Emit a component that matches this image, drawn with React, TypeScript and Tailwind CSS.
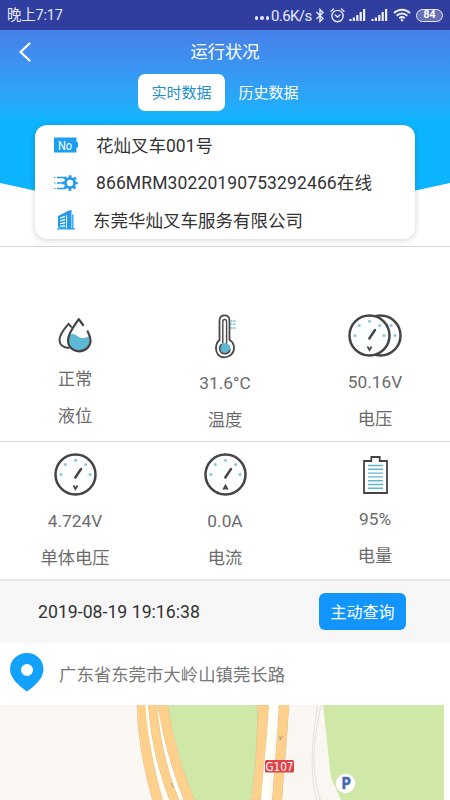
import { useState, ReactNode } from "react";

interface Reading {
  label: string;
  value: string;
  icon: ReactNode;
  iconBox: string;
}

const DropIcon = () => (
  <svg width="34" height="36" viewBox="0 0 34 36" fill="none" strokeLinecap="round" strokeLinejoin="round">
    <path d="M10.5 30C4.5 29.500 1.500 26 1.500 21.500C1.500 16.500 6 11 10.500 5.800L13.200 8.800" stroke="#4a4548" strokeWidth="2" />
    <path d="M10.800 17C14.500 14.800 17.500 16.500 20 18.500C23.500 21 27 20 31 18.500C32.500 27 28 32.500 21.200 33C13 32.500 9.300 26 10.800 17Z" fill="#5db9d3" />
    <path d="M25 7L20.800 1.200C16 8 10 15 10 22.500C10.200 29.500 15.500 33.300 21 33.300C27.500 33.300 32.500 28.500 32.500 22.500C32.500 19.500 31.300 16.500 29.700 13.500" stroke="#454145" strokeWidth="2.200" />
  </svg>
);

const ThermometerIcon = () => (
  <svg width="21" height="45" viewBox="0 0 21 45" fill="none" strokeLinecap="round">
    <path d="M4.500 26V6.200C4.500 -0.300 14.500 -0.300 14.500 6.200V26C17.500 27.700 19 30.500 19 34C19 39.500 14.800 43.300 9.500 43.300C4.200 43.300 1 39.500 1 34.500C1 30.800 2.300 27.800 4.500 26Z" stroke="#4a4548" strokeWidth="1.800" />
    <circle cx="10" cy="34.500" r="5.500" fill="#5db9d3" />
    <path d="M7.800 29V7.500C7.800 4.800 11.600 4.800 11.600 7.500V29M6.300 30.500C3 33.500 4.500 39.500 10 39.700C13 39.600 14.500 38 15 36" stroke="#4a4548" strokeWidth="1.400" />
    <path d="M16 7H17M19 7H20M16 10.300H17M19 10.300H20M16 14H17M19 14H20" stroke="#70bdd2" strokeWidth="1.600" />
  </svg>
);

const GaugeFace = ({ unit }: { unit: "V" | "A" }) => (
  <>
    <circle cx="21.500" cy="21.500" r="20" fill="#fcfeff" stroke="#444" strokeWidth="2.500" />
    <g fill="#8bc7d9">
      <circle cx="7" cy="21.500" r="1.500" />
      <circle cx="11.300" cy="11.500" r="1.500" />
      <circle cx="21.500" cy="7.300" r="1.500" />
      <circle cx="31.700" cy="11.500" r="1.500" />
      <circle cx="36" cy="21.500" r="1.500" />
    </g>
    <path d="M21.300 24.500L27 16" stroke="#444" strokeWidth="2.400" strokeLinecap="round" />
    {unit === "V" ? (
      <path d="M19.500 32.500L21.500 36L23.500 32.500" stroke="#444" strokeWidth="1.700" fill="none" />
    ) : (
      <path d="M19.300 36.500L21.500 32.500L23.700 36.500M20.300 35.500H22.700" stroke="#444" strokeWidth="1.600" fill="none" />
    )}
  </>
);

const GaugeIcon = ({ unit }: { unit: "V" | "A" }) => (
  <svg width="43" height="43" viewBox="0 0 43 43">
    <GaugeFace unit={unit} />
  </svg>
);

const DoubleGaugeIcon = () => (
  <svg width="54" height="43" viewBox="0 0 54 43">
    <circle cx="32.500" cy="21.500" r="20" fill="#fff" stroke="#444" strokeWidth="2.500" />
    <circle cx="43" cy="11.500" r="1.500" fill="#8bc7d9" />
    <circle cx="47" cy="21.500" r="1.500" fill="#8bc7d9" />
    <GaugeFace unit="V" />
  </svg>
);

const BatteryIcon = () => (
  <svg width="25" height="38" viewBox="0 0 25 38" fill="none">
    <path d="M1 5H8.300V1H16.700V5H24V37H1Z" stroke="#444" strokeWidth="1.800" />
    <path d="M5 9.500H20M5 13.300H20M5 17.100H20M5 20.900H20M5 24.700H20M5 28.500H20M5 32.300H20" stroke="#62b9cf" strokeWidth="1.400" />
  </svg>
);

const NumberIcon = () => (
  <svg width="24" height="16" viewBox="0 0 24 16">
    <path d="M0 .5H22.500V5H24V10.500H22.500V15.500H0Z" fill="#1d9ff1" />
    <text x="4" y="12.500" fontSize="12.500" fontFamily="Roboto, sans-serif" textLength="14" lengthAdjust="spacingAndGlyphs" fill="#fff">No</text>
  </svg>
);

const DeviceIcon = () => (
  <svg width="24" height="16" viewBox="0 0 24 16" fill="none" stroke="#249bea">
    <path d="M0 2.500H1.500M0 8H1.500M0 13.500H1.500" strokeWidth="1" />
    <path d="M3 2.500H11M3 8H9M3 13.500H11" strokeWidth="1.300" />
    <circle cx="16" cy="8" r="4.600" strokeWidth="2.800" />
    <circle cx="16" cy="8" r="6.600" strokeWidth="2.400" strokeDasharray="2.800 2.384" strokeDashoffset="1.400" />
  </svg>
);

const CompanyIcon = () => (
  <svg width="18" height="20" viewBox="0 0 18 20" fill="#249bea">
    <path d="M1 6L10 1.500V5L3 7.500V17.500H1Z" />
    <path d="M10 1L14.500 0V19H10Z" />
    <path d="M15.200 4L16.500 5V18.300H18V19.500H0V18.300H15.200Z" />
    <path d="M2.500 9.700L8.500 7.700M2.500 12.400L8.500 11M2.500 15L8.500 14.300M2.500 17.500H8.500" stroke="#249bea" strokeWidth="1.500" />
    <path d="M8.500 5V18.500" stroke="#249bea" />
  </svg>
);

const SignalIcon = () => (
  <svg width="17" height="12" viewBox="0 0 17 12" stroke="#eef0ff" strokeWidth="2.200">
    <path d="M1.500 12V10M4.900 12V8.500M8.300 12V6M11.700 12V3M15.100 12V0" />
  </svg>
);

const StatusBar = () => (
  <div className="flex h-[30px] items-center bg-[#303f9f] pl-[7px] pr-[7px] text-[#e6e9ff]">
    <span className="flex-1 pt-[2px] text-[14.500px] tracking-[-0.2px]">晚上7:17</span>
    <span className="mr-[2px] mt-[6px] flex gap-[2px]">
      <i className="size-[3.500px] rounded-full bg-[#e6e9ff]" />
      <i className="size-[3.500px] rounded-full bg-[#e6e9ff]" />
      <i className="size-[3.500px] rounded-full bg-[#e6e9ff]" />
    </span>
    <span className="w-[41px] whitespace-nowrap pt-[2px] text-[15px] tracking-[-0.600px]">0.6K/s</span>
    <svg className="ml-[4px] shrink-0" width="8" height="15" viewBox="0 0 8 15" fill="none" stroke="#e6e9ff" strokeWidth="1.400">
      <path d="M.5 4L7 10.500L4 13.500V1.500L7 4.500L.5 11" />
    </svg>
    <svg className="ml-[6px] shrink-0" width="15" height="15" viewBox="0 0 14 14" fill="none" stroke="#e6e9ff" strokeWidth="1.300" strokeLinecap="round">
      <circle cx="7" cy="7.500" r="5.300" />
      <path d="M4.800 6.500L7 8.500L9.300 6.500M1 3L3.300 1M13 3L10.700 1" />
    </svg>
    <span className="ml-[4px] flex shrink-0 gap-[5px]">
      <SignalIcon />
      <SignalIcon />
    </span>
    <svg className="ml-[5px] shrink-0" width="18" height="14" viewBox="0 0 18 14" fill="none" stroke="#e6e9ff" strokeWidth="2">
      <path d="M1 5C5.500 .5 12.500 .5 17 5M3.700 7.800C6.800 4.700 11.200 4.700 14.300 7.800M6.300 10.300C8 8.800 10 8.800 11.700 10.300" />
      <circle cx="9" cy="12.200" r="1.200" fill="#e6e9ff" stroke="none" />
    </svg>
    <span className="ml-[5px] flex h-[13px] w-[27px] shrink-0 items-center justify-center rounded-full border-[1.5px] border-[#e6e9ff] bg-[#6670b8] pt-px text-[10.500px] font-bold leading-none text-white">
      84
    </span>
  </div>
);

const MapView = () => (
  <svg className="block" width="444" height="95" viewBox="0 0 444 95">
    <rect width="444" height="95" fill="#faf7f3" />
    <path d="M167 0H256L258 4V40L251 95H194C183 68 174 35 167 0Z" fill="#cfe8a8" />
    <path d="M323 0H444V95H341L331 73Z" fill="#cfe8a8" />
    <g fill="none">
      <path d="M142 -1C142 32 149 66 158 97" stroke="#d9b98d" strokeWidth="10" />
      <path d="M142 -1C142 32 149 66 158 97" stroke="#fdd08b" strokeWidth="9.300" />
      <path d="M147.500 0C149 34 157 66 168 97" stroke="#fffff6" strokeWidth="4" />
      <path d="M157.500 0C162 32 169 62 180 92" stroke="#fffff6" strokeWidth="3" />
      <path d="M152.500 -1C155 32 162 66 175 97" stroke="#d9b98d" strokeWidth="9" />
      <path d="M152.500 -1C155 32 162 66 175 97" stroke="#fdd08b" strokeWidth="8.300" />
      <path d="M162.500 -1C168 34 178 68 190 97" stroke="#d9b98d" strokeWidth="10" />
      <path d="M162.500 -1C168 34 178 68 190 97" stroke="#fdd08b" strokeWidth="9.300" />
      <path d="M273.500 0C271 32 266 65 265 97" stroke="#fffff6" strokeWidth="9" />
      <path d="M284 -1C283 29 279 63 277 97" stroke="#d9b98d" strokeWidth="10" />
      <path d="M284 -1C283 29 279 63 277 97" stroke="#fdd08b" strokeWidth="9.300" />
      <path d="M317.500 0C315 24 307 58 317 97M321 0C315 30 309 61 321 97" stroke="#d8d5d2" strokeWidth=".7" />
    </g>
    <path d="M256 0H268.500C267 32 263 65 260.500 95H251C256 64 257 32 258 4Z" fill="#fdd08b" stroke="#d9b98d" strokeWidth=".5" />
    <path d="M280 35L283 31M280 31V35M171 78L173 82" stroke="#b8a680" strokeWidth="1.200" />
    <rect x="265" y="55" width="29" height="12.500" rx="1.500" fill="#df4248" />
    <text x="279.500" y="65.500" textAnchor="middle" fontSize="11.500" fontFamily="'DejaVu Sans', sans-serif" textLength="28" lengthAdjust="spacingAndGlyphs" fill="#fff">G107</text>
    <circle cx="345.500" cy="78.500" r="9.700" fill="#fff" />
    <text x="346" y="84" textAnchor="middle" fontSize="15.500" fontWeight="bold" fontFamily="'Open Sans', sans-serif" stroke="#4169b1" strokeWidth=".4" fill="#4169b1">P</text>
  </svg>
);

const readings: Reading[] = [
  { label: "液位", value: "正常", icon: <DropIcon />, iconBox: "pt-[71px] h-[113.500px]" },
  { label: "温度", value: "31.6°C", icon: <ThermometerIcon />, iconBox: "pt-[67px] h-[118px]" },
  { label: "电压", value: "50.16V", icon: <DoubleGaugeIcon />, iconBox: "pt-[67px] h-[117px]" },
  { label: "单体电压", value: "4.724V", icon: <GaugeIcon unit="V" />, iconBox: "pt-[11px] h-[61px]" },
  { label: "电流", value: "0.0A", icon: <GaugeIcon unit="A" />, iconBox: "pt-[11px] h-[61px]" },
  { label: "电量", value: "95%", icon: <BatteryIcon />, iconBox: "pt-[14px] h-[59px]" },
];

const ReadingCell = ({ label, value, icon, iconBox }: Reading) => (
  <div className="flex flex-col items-center text-[17.3px] leading-9 text-[#6b6b6b]">
    <div className={iconBox}>{icon}</div>
    <span>{value}</span>
    <span className="mt-px">{label}</span>
  </div>
);

export default function App() {
  const [tab, setTab] = useState<"live" | "history">("live");

  const tabClass = (active: boolean) =>
    active
      ? "h-[37px] w-[87px] rounded-[7px] bg-white pt-[2px] text-[15px] text-[#238fcb]"
      : "h-[37px] w-[87px] rounded-[7px] pt-[2px] text-[15px] text-white";

  return (
    <div className="h-[800px] w-[450px] overflow-hidden bg-white font-['Roboto','Noto_Sans_CJK_SC',sans-serif]">
      <StatusBar />

      <div className="relative h-[216px]">
        <div className="absolute inset-x-0 top-0 h-[202px] bg-linear-to-b from-[#467fe9] to-[#0cb4fe] to-45% [clip-path:polygon(0_0,100%_0,100%_153px,50%_100%,0_153px)]" />
        <div className="relative flex flex-col">
          <div className="flex h-[44px] items-center pl-[19px] pr-[31px] text-white">
            <svg width="12" height="20" viewBox="0 0 12 20" fill="none" stroke="#fff" strokeWidth="2.200" strokeLinecap="round" strokeLinejoin="round">
              <path d="M10.500 1.500L1.500 10L10.500 18.500" />
            </svg>
            <h1 className="flex-1 pt-[2px] text-center text-[17.300px]">运行状况</h1>
          </div>
          <div className="flex justify-center">
            <button className={tabClass(tab === "live")} onClick={() => setTab("live")}>实时数据</button>
            <button className={tabClass(tab === "history")} onClick={() => setTab("history")}>历史数据</button>
          </div>
          <div className="mx-[35px] mt-[14px] h-[114px] rounded-xl bg-white pl-[19px] pt-[1px] text-[17.500px] text-[#333] shadow-[0_1px_6px_rgba(0,0,0,0.18)]">
            <div className="flex h-[38px] items-center gap-[18px]">
              <NumberIcon />
              <span className="pt-[2px]">花灿叉车001号</span>
            </div>
            <div className="flex h-[37px] items-center gap-[18px]">
              <DeviceIcon />
              <span className="pt-[2px] tracking-[0.12px]">866MRM30220190753292466在线</span>
            </div>
            <div className="flex h-[38px] items-center gap-[18px] pl-[3px]">
              <CompanyIcon />
              <span className="pt-[2px]">东莞华灿叉车服务有限公司</span>
            </div>
          </div>
        </div>
      </div>

      <div className="grid h-[195px] grid-cols-3 border-t border-[#d5d5d5]">
        {readings.slice(0, 3).map((item) => <ReadingCell key={item.label} {...item} />)}
      </div>
      <div className="grid h-[138px] grid-cols-3 border-t border-[#d5d5d5]">
        {readings.slice(3).map((item) => <ReadingCell key={item.label} {...item} />)}
      </div>

      <div className="flex h-[64px] items-center justify-between border-t-2 border-[#e5e5e5] bg-[#f7f7f7] pl-[38px] pr-[44px]">
        <span className="pt-px text-[17.700px] text-[#333]">2019-08-19 19:16:38</span>
        <button className="mb-px h-[37px] w-[87px] rounded-md bg-[#1296fd] pt-[2px] text-[16px] text-white">主动查询</button>
      </div>

      <div className="flex h-[62px] items-center pl-[10px]">
        <svg className="mb-[4px]" width="34" height="39" viewBox="0 0 34 39">
          <path fillRule="evenodd" d="M17 0C7.500 0 0 7 0 16.500C0 25 9 33 17 38.500C25 33 33.500 25 33.500 16.500C33.500 7 26.500 0 17 0ZM17 11A6 6 0 1 1 17 23A6 6 0 1 1 17 11Z" fill="#13a2fb" />
        </svg>
        <span className="ml-[15px] pt-[2px] text-[17.400px] text-[#777]">广东省东莞市大岭山镇莞长路</span>
      </div>

      <MapView />
    </div>
  );
}
